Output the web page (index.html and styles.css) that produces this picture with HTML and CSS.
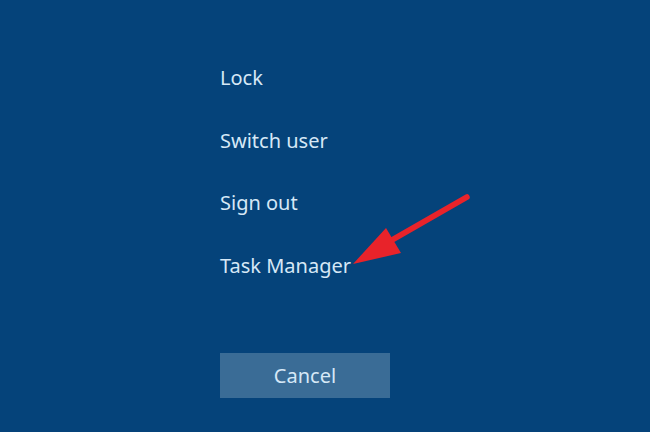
FILE: index.html
```html
<!DOCTYPE html>
<html>
<head>
<meta charset="utf-8">
<link rel="stylesheet" href="styles.css">
</head>
<body>
<div class="screen">
  <ul class="menu">
    <li class="item">Lock</li>
    <li class="item">Switch user</li>
    <li class="item">Sign out</li>
    <li class="item">Task Manager</li>
  </ul>
  <button class="cancel">Cancel</button>
  <svg class="arrow" width="650" height="432" viewBox="0 0 650 432">
    <path d="M467 197 L392 240" stroke="#e8232a" stroke-width="5.5" stroke-linecap="round" fill="none"/>
    <path d="M353 264 L386 228 L401 253 Z" fill="#e8232a"/>
  </svg>
</div>
</body>
</html>
```
FILE: styles.css
```css
html, body {
  margin: 0;
  padding: 0;
}
body {
  width: 650px;
  height: 432px;
  overflow: hidden;
  background: #05437a;
  font-family: "Noto Sans", "Open Sans", sans-serif;
}
.screen {
  position: relative;
  width: 650px;
  height: 432px;
  padding: 63px 0 0 220px;
  box-sizing: border-box;
}
.menu {
  list-style: none;
  margin: 0;
  padding: 0;
  display: flex;
  flex-direction: column;
}
.item {
  color: #d6e8f6;
  font-size: 20px;
  line-height: 30px;
  height: 62.7px;
}
.cancel {
  margin-top: 39px;
  width: 170px;
  height: 45px;
  background: #3a6c96;
  border: none;
  color: #d6e8f6;
  font-family: inherit;
  font-size: 20px;
  padding: 0;
}
.arrow {
  position: absolute;
  left: 0;
  top: 0;
  pointer-events: none;
}
```
